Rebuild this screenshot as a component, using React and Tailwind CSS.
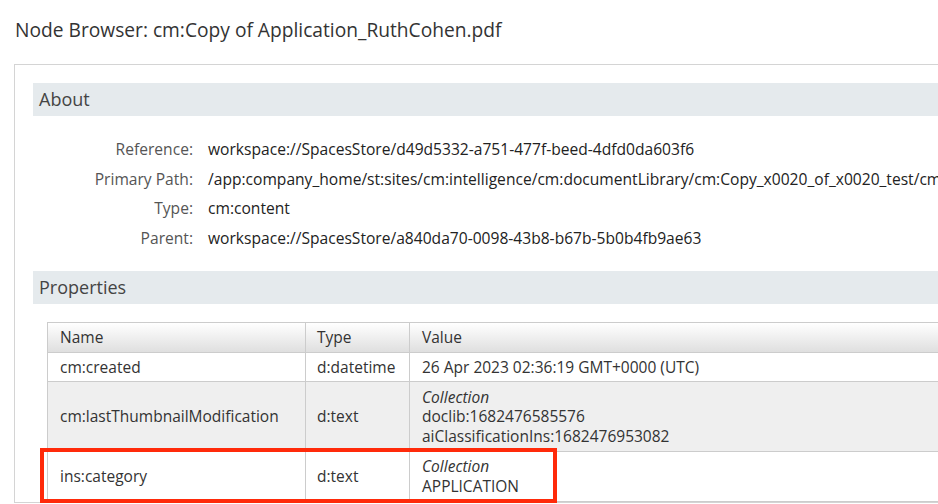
import React from 'react';

const about = [
  ['Reference:', 'workspace://SpacesStore/d49d5332-a751-477f-beed-4dfd0da603f6'],
  ['Primary Path:', '/app:company_home/st:sites/cm:intelligence/cm:documentLibrary/cm:Copy_x0020_of_x0020_test/cm:Copy_x0020_of_x0020_Application_RuthCohen.pdf'],
  ['Type:', 'cm:content'],
  ['Parent:', 'workspace://SpacesStore/a840da70-0098-43b8-b67b-5b0b4fb9ae63'],
];

const props = [
  { name: 'cm:created', type: 'd:datetime', value: ['26 Apr 2023 02:36:19 GMT+0000 (UTC)'], h: 'h-[29px]', bg: 'bg-white' },
  { name: 'cm:lastThumbnailModification', type: 'd:text', collection: true, value: ['doclib:1682476585576', 'aiClassificationIns:1682476953082'], h: 'h-[70px]', bg: 'bg-[#efefef]' },
  { name: 'ins:category', type: 'd:text', collection: true, value: ['APPLICATION'], h: 'h-[50px]', bg: 'bg-white' },
];

function SectionHeader({ children }) {
  return (
    <div className="h-[33px] bg-[#e5eaed] pl-[6px] flex items-center text-[18px] text-[#444]">
      {children}
    </div>
  );
}

export default function App() {
  return (
    <div
      className="relative w-[938px] h-[504px] overflow-hidden bg-white text-[#333]"
      style={{ fontFamily: '"Open Sans", "Liberation Sans", sans-serif' }}
    >
      <h1 className="pl-[15px] pt-[18px] h-[64px] text-[19.2px] leading-[24px] font-normal text-[#333]">
        Node Browser: cm:Copy of Application_RuthCohen.pdf
      </h1>

      <div className="ml-[14px] w-[1000px] border border-[#d4d4d4] pl-[18px] pt-[18px]">
        <SectionHeader>About</SectionHeader>

        <div className="mt-[19px] mb-[18px]">
          {about.map(([label, value]) => (
            <div key={label} className="flex h-[29.6px] items-center text-[15.6px]">
              <div className="w-[160px] text-right text-[#555] shrink-0">{label}</div>
              <div className="pl-[15px] whitespace-nowrap text-[#222]">{value}</div>
            </div>
          ))}
        </div>

        <SectionHeader>Properties</SectionHeader>

        <div className="mt-[18px] ml-[14px]">
          <table className="w-[980px] border-collapse text-[15.5px] text-[#333]">
            <thead>
              <tr className="h-[30px] bg-gradient-to-b from-white to-[#dedede]">
                <th className="w-[258px] border border-[#ccc] text-left font-normal pl-[12px]">Name</th>
                <th className="w-[104px] border border-[#ccc] text-left font-normal pl-[11px]">Type</th>
                <th className="border border-[#ccc] text-left font-normal pl-[12px]">Value</th>
              </tr>
            </thead>
            <tbody>
              {props.map((p) => (
                <tr key={p.name} className={`${p.h} ${p.bg}`}>
                  <td className="border border-[#ccc] pl-[12px] whitespace-nowrap">{p.name}</td>
                  <td className="border border-[#ccc] pl-[11px] whitespace-nowrap">{p.type}</td>
                  <td className="border border-[#ccc] pl-[12px] leading-[19.5px]">
                    {p.collection && <div className="italic">Collection</div>}
                    {p.value.map((v) => (
                      <div key={v}>{v}</div>
                    ))}
                  </td>
                </tr>
              ))}
            </tbody>
          </table>
        </div>
      </div>

      <div className="absolute left-[40px] top-[448px] w-[517px] h-[55px] border-[4px] border-[#ff2a0a]" />
    </div>
  );
}
